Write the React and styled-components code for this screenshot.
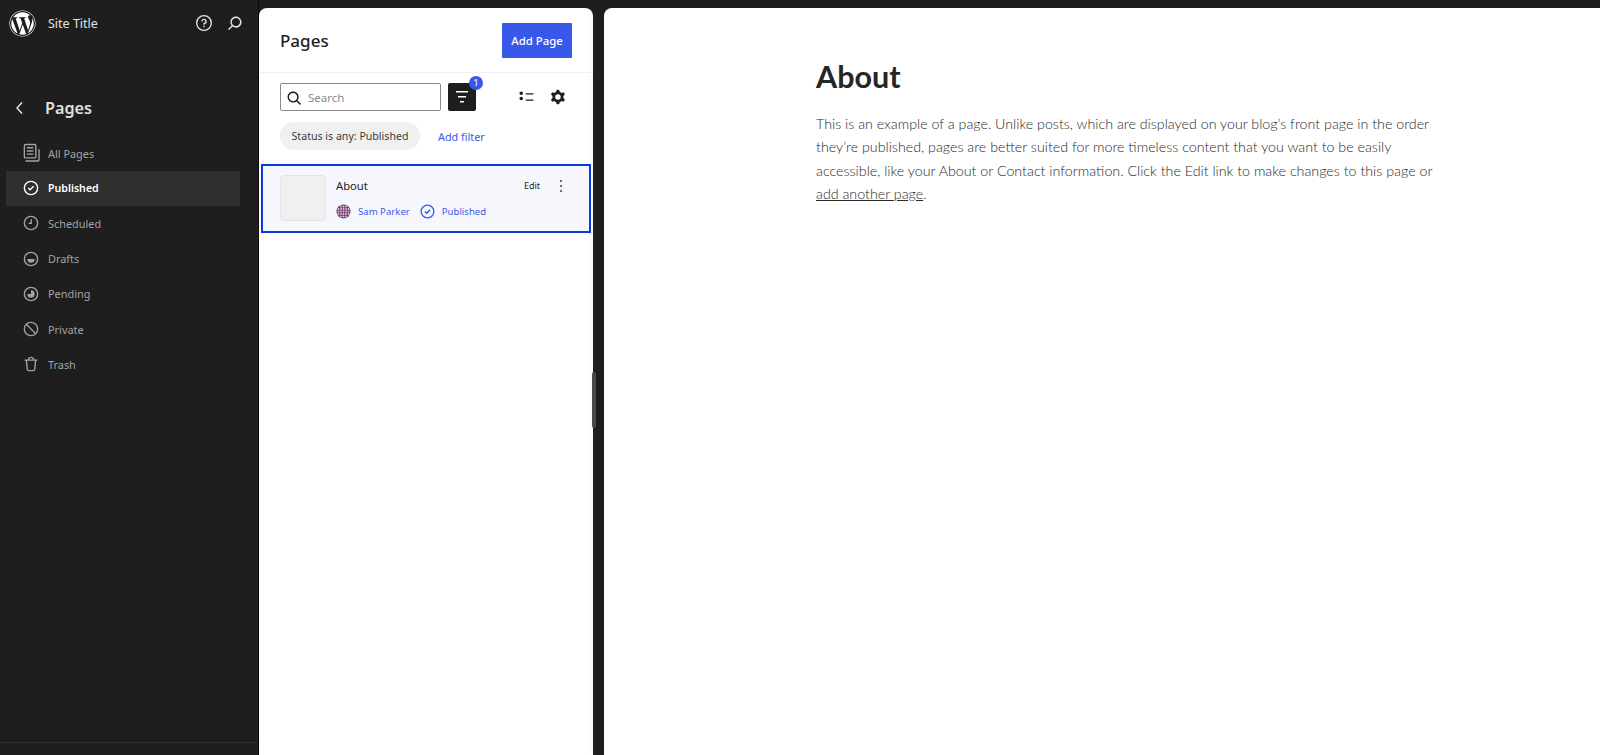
import React from "react";
import styled, { createGlobalStyle } from "styled-components";
import { FaWordpress } from "react-icons/fa";

const Global = createGlobalStyle`
  html, body { margin: 0; padding: 0; height: 100%; background: #1e1e1e; }
  body { font-family: "Noto Sans", "Open Sans", Arial, sans-serif; overflow: hidden; }
  * { box-sizing: border-box; }
`;

const Shell = styled.div`
  display: flex;
  height: 755px;
  background: #1e1e1e;
  overflow: hidden;
`;

const Sidebar = styled.aside`
  width: 259px;
  flex: none;
  display: flex;
  flex-direction: column;
  color: #e0e0e0;
  border-right: 1px solid #0a0a0a;
`;

const TopBar = styled.div`
  height: 46px;
  display: flex;
  align-items: center;
  padding: 0 12px 0 9px;
`;

const SiteTitle = styled.span`
  margin-left: 12px;
  flex: 1;
  font-size: 12.5px;
  color: #e4e4e4;
`;

const TopIcons = styled.div`
  display: flex;
  align-items: center;
  gap: 9px;
  color: #e4e4e4;
`;

const NavHead = styled.div`
  display: flex;
  align-items: center;
  margin-top: 46px;
  height: 32px;
  padding-left: 8px;
`;

const NavTitle = styled.h2`
  margin: 0 0 0 13px;
  font-size: 16.2px;
  line-height: 1;
  font-weight: 600;
  color: #e0e0e0;
`;

const NavList = styled.nav`
  margin: 11.5px 18px 0 6px;
  display: flex;
  flex-direction: column;
`;

const NavItem = styled.div`
  height: 35.2px;
  display: flex;
  align-items: center;
  gap: 6px;
  padding-left: 14px;
  font-size: ${(p) => (p.$active ? "10.6px" : "10.9px")};
  color: ${(p) => (p.$active ? "#ffffff" : "#a3a3a3")};
  font-weight: ${(p) => (p.$active ? 600 : 400)};
  background: ${(p) => (p.$active ? "#2f2f2f" : "transparent")};
`;

const SideFoot = styled.div`
  margin-top: auto;
  height: 13px;
  border-top: 1px solid #2f2f2f;
`;

const ListPanel = styled.section`
  position: relative;
  width: 334px;
  flex: none;
  margin-top: 8px;
  background: linear-gradient(to right, #ffffff 97%, #fbfbfb 100%);
  border-radius: 8px 8px 0 0;
  display: flex;
  flex-direction: column;
`;

const ResizeHandle = styled.div`
  position: absolute;
  right: -3px;
  top: 364px;
  width: 4px;
  height: 56px;
  background: #4b4b4b;
  border-radius: 2px;
`;

const PanelHead = styled.header`
  height: 65px;
  flex: none;
  display: flex;
  align-items: center;
  justify-content: space-between;
  padding: 1px 21px 0;
  border-bottom: 1px solid #f0f0f0;
`;

const PanelTitle = styled.h1`
  margin: 0;
  font-size: 17px;
  font-weight: 500;
  color: #1e1e1e;
`;

const AddButton = styled.button`
  width: 70px;
  height: 35px;
  border: 0;
  border-radius: 1px;
  background: #3858e9;
  color: #fff;
  font: 500 11.4px "Noto Sans", sans-serif;
  padding: 0;
`;

const Toolbar = styled.div`
  display: flex;
  align-items: center;
  padding: 10px 21px 0;
  height: 38px;
  flex: none;
`;

const SearchBox = styled.div`
  width: 161px;
  height: 28px;
  border: 1px solid #8a8a8a;
  border-radius: 2px;
  display: flex;
  align-items: center;
  gap: 3px;
  padding: 1px 0 0 2px;
  font-size: 11.5px;
  color: #8a8a8a;
`;

const FilterButton = styled.div`
  position: relative;
  width: 28px;
  height: 28px;
  margin-left: 7px;
  background: #1e1e1e;
  border-radius: 2px;
  color: #fff;
  display: flex;
  align-items: center;
  justify-content: center;
`;

const Badge = styled.span`
  position: absolute;
  top: -7px;
  right: -7px;
  width: 14px;
  height: 14px;
  border-radius: 50%;
  background: #3858e9;
  color: #fff;
  font-size: 9.5px;
  line-height: 14px;
  text-align: center;
`;

const ViewIcons = styled.div`
  margin-left: auto;
  margin-right: 3px;
  display: flex;
  align-items: center;
  gap: 10px;
  color: #1e1e1e;
`;

const FilterRow = styled.div`
  display: flex;
  align-items: center;
  padding: 11px 21px 0;
  flex: none;
`;

const Chip = styled.div`
  height: 28px;
  width: 140px;
  border-radius: 14px;
  background: #f0f0f0;
  color: #3a3a3a;
  font-size: 10.6px;
  line-height: 28px;
  text-align: center;
  white-space: nowrap;
`;

const AddFilter = styled.span`
  margin-left: 18px;
  font-size: 10.8px;
  color: #3858e9;
`;

const PageRow = styled.article`
  margin: 14px 2px 0 2px;
  height: 69px;
  border: 2px solid #0b3be0;
  background: #f6f7fd;
  display: flex;
  align-items: flex-start;
  padding: 9px 0 0 17px;
`;

const Thumb = styled.div`
  width: 46px;
  height: 46px;
  flex: none;
  background: #f0f0f0;
  border: 1px solid #e4e4e4;
  border-radius: 4px;
`;

const RowBody = styled.div`
  margin-left: 10px;
  flex: 1;
  display: flex;
  flex-direction: column;
`;

const RowTop = styled.div`
  display: flex;
  align-items: center;
  height: 21px;
`;

const RowTitle = styled.span`
  flex: 1;
  font-size: 11.2px;
  color: #1e1e1e;
`;

const EditLink = styled.span`
  font-size: 9px;
  color: #1e1e1e;
`;

const More = styled.span`
  display: flex;
  margin: 0 18px 0 11px;
  color: #1e1e1e;
`;

const RowMeta = styled.div`
  display: flex;
  align-items: center;
  margin-top: 5px;
  font-size: 9.6px;
  color: #3858e9;
`;

const MetaText = styled.span`
  margin-left: ${(p) => p.$gap}px;
`;

const Preview = styled.main`
  flex: 1;
  margin: 8px 0 0 11px;
  background: #fff;
  border-radius: 8px 0 0 0;
  padding: 50px 0 0 212px;
  font-family: Lato, "Noto Sans", sans-serif;
`;

const PreviewTitle = styled.h1`
  margin: 0;
  font: 700 30.5px/36px Lato, sans-serif;
  color: #262626;
`;

const PreviewBody = styled.p`
  margin: 18px 0 0;
  font-size: 14.25px;
  line-height: 23.4px;
  font-weight: 300;
  color: #2a2a2a;
  white-space: nowrap;
`;

const PreviewLink = styled.span`
  text-decoration: underline;
`;

const Icon = ({ d, size = 24, style }) => (
  <svg width={size} height={size} viewBox="0 0 24 24" fill="currentColor" style={{ flex: "none", display: "block", ...style }}>
    {[].concat(d).map((p, i) => (
      <path key={i} d={p} fillRule="evenodd" clipRule="evenodd" />
    ))}
  </svg>
);

const ring = "M12 18.5a6.5 6.5 0 1 1 0-13 6.5 6.5 0 0 1 0 13ZM4 12a8 8 0 1 1 16 0 8 8 0 0 1-16 0Z";
const paths = {
  pages: [
    "M14.5 5.5h-7V7h7V5.5ZM7.5 9h7v1.5h-7V9Zm7 3.5h-7V14h7v-1.5Z",
    "M16 2H6a2 2 0 0 0-2 2v12a2 2 0 0 0 2 2h10a2 2 0 0 0 2-2V4a2 2 0 0 0-2-2ZM6 3.5h10a.5.5 0 0 1 .5.5v12a.5.5 0 0 1-.5.5H6a.5.5 0 0 1-.5-.5V4a.5.5 0 0 1 .5-.5Z",
    "M20 8v11c0 .69-.31 1-.999 1H6v1.5h13.001c1.52 0 2.499-.982 2.499-2.5V8H20Z",
  ],
  published: ring + "m11.53-1.47-1.06-1.06L11 12.94l-1.47-1.47-1.06 1.06L11 15.06l4.53-4.53Z",
  scheduled: ring + "m9 1V8h-1.5v3.5h-2V13H13Z",
  drafts: ring + "m8 4a4 4 0 0 0 4-4H8a4 4 0 0 0 4 4Z",
  pending: ring + "m8 4a4 4 0 0 1-4-4h4V8a4 4 0 0 1 0 8Z",
  notAllowed: "M12 18.5A6.5 6.5 0 0 1 6.93 7.931l9.139 9.138A6.473 6.473 0 0 1 12 18.5Zm5.123-2.498a6.5 6.5 0 0 0-9.124-9.124l9.124 9.124ZM4 12a8 8 0 1 1 16 0 8 8 0 0 1-16 0Z",
  trash: "M12 5.5A2.25 2.25 0 0 0 9.878 7h4.244A2.251 2.251 0 0 0 12 5.5ZM12 4a3.751 3.751 0 0 0-3.675 3H5v1.5h1.27l.818 8.997a2.75 2.75 0 0 0 2.739 2.501h4.347a2.75 2.75 0 0 0 2.738-2.5L17.73 8.5H19V7h-3.325A3.751 3.751 0 0 0 12 4Zm4.224 4.5H7.776l.806 8.861a1.25 1.25 0 0 0 1.245 1.137h4.347a1.25 1.25 0 0 0 1.245-1.137l.805-8.861Z",
  help: "M12 4.75a7.25 7.25 0 100 14.5 7.25 7.25 0 000-14.5zM3.25 12a8.75 8.75 0 1117.5 0 8.75 8.75 0 01-17.5 0zM12 8.75a1.5 1.5 0 01.167 2.99c-.465.052-.917.44-.917 1.01V14h1.5v-.845A3 3 0 109 10.25h1.5a1.5 1.5 0 011.5-1.5zM11.25 15v1.5h1.5V15h-1.5z",
  search: "M13 5c-3.3 0-6 2.7-6 6 0 1.4.5 2.7 1.3 3.7l-3.8 3.8 1.1 1.1 3.8-3.8c1 .8 2.3 1.3 3.7 1.3 3.3 0 6-2.7 6-6S16.3 5 13 5zm0 10.5c-2.5 0-4.5-2-4.5-4.5s2-4.5 4.5-4.5 4.5 2 4.5 4.5-2 4.5-4.5 4.5z",
  searchInput: "M11 5c-3.3 0-6 2.7-6 6s2.7 6 6 6c1.4 0 2.7-.5 3.7-1.3l3.8 3.8 1.1-1.1-3.8-3.8c.8-1 1.3-2.3 1.3-3.7 0-3.3-2.7-6-6-6zm0 10.5c-2.5 0-4.5-2-4.5-4.5s2-4.5 4.5-4.5 4.5 2 4.5 4.5-2 4.5-4.5 4.5z",
  funnel: "M10 17.5H14V16H10V17.5ZM6 6V7.5H18V6H6ZM8 12.5H16V11H8V12.5Z",
  list: "M11.1 15.8H20v-1.5h-8.9v1.5zm0-8.6v1.5H20V7.2h-8.9zM6 11c-1.1 0-2 .9-2 2s.9 2 2 2 2-.9 2-2-.9-2-2-2zm0-6c-1.1 0-2 .9-2 2s.9 2 2 2 2-.9 2-2-.9-2-2-2z",
  cog: "M10.289 4.836A1 1 0 0111.275 4h1.306a1 1 0 01.987.836l.244 1.466c.787.26 1.503.679 2.108 1.218l1.393-.522a1 1 0 011.216.437l.653 1.13a1 1 0 01-.23 1.273l-1.148.944a6.025 6.025 0 010 2.435l1.149.946a1 1 0 01.23 1.272l-.653 1.13a1 1 0 01-1.216.437l-1.394-.522c-.605.54-1.32.958-2.108 1.218l-.244 1.466a1 1 0 01-.987.836h-1.306a1 1 0 01-.986-.836l-.244-1.466a5.995 5.995 0 01-2.108-1.218l-1.394.522a1 1 0 01-1.217-.436l-.653-1.131a1 1 0 01.23-1.272l1.149-.946a6.026 6.026 0 010-2.435l-1.148-.944a1 1 0 01-.23-1.272l.653-1.131a1 1 0 011.217-.437l1.393.522a5.994 5.994 0 012.108-1.218l.244-1.466zM14.929 12a3 3 0 11-6 0 3 3 0 016 0z",
  more: "M13 19h-2v-2h2v2zm0-6h-2v-2h2v2zm0-6h-2V5h2v2z",
  back: "M14.6 7l-1.2-1L8 12l5.4 6 1.2-1-4.6-5z",
};

const Avatar = () => {
  const dots = [];
  for (let y = 0; y < 5; y++) {
    for (let x = 0; x < 5; x++) {
      const cx = 2.5 + x * 2.5;
      const cy = 2.5 + y * 2.5;
      if ((cx - 7.5) ** 2 + (cy - 7.5) ** 2 < 40) dots.push(<circle key={`${x}-${y}`} cx={cx} cy={cy} r="0.9" fill="#e3c9df" />);
    }
  }
  return (
    <svg width="15" height="15" viewBox="0 0 15 15" style={{ flex: "none", display: "block" }}>
      <circle cx="7.5" cy="7.5" r="7" fill="#6f3a68" />
      {dots}
    </svg>
  );
};

const navItems = [
  ["All Pages", paths.pages],
  ["Published", paths.published, true],
  ["Scheduled", paths.scheduled],
  ["Drafts", paths.drafts],
  ["Pending", paths.pending],
  ["Private", paths.notAllowed],
  ["Trash", paths.trash],
];

export default function App() {
  return (
    <Shell>
      <Global />
      <Sidebar>
        <TopBar>
          <FaWordpress size={27} color="#fff" />
          <SiteTitle>Site Title</SiteTitle>
          <TopIcons>
            <Icon d={paths.help} size={22} />
            <Icon d={paths.search} size={22} />
          </TopIcons>
        </TopBar>
        <NavHead>
          <Icon d={paths.back} size={24} />
          <NavTitle>Pages</NavTitle>
        </NavHead>
        <NavList>
          {navItems.map(([label, d, active]) => (
            <NavItem key={label} $active={active}>
              <Icon d={d} size={22} />
              {label}
            </NavItem>
          ))}
        </NavList>
        <SideFoot />
      </Sidebar>
      <ListPanel>
        <PanelHead>
          <PanelTitle>Pages</PanelTitle>
          <AddButton>Add Page</AddButton>
        </PanelHead>
        <Toolbar>
          <SearchBox>
            <Icon d={paths.searchInput} size={22} style={{ color: "#1e1e1e" }} />
            Search
          </SearchBox>
          <FilterButton>
            <Icon d={paths.funnel} size={24} />
            <Badge>1</Badge>
          </FilterButton>
          <ViewIcons>
            <Icon d={paths.list} size={21} />
            <Icon d={paths.cog} size={22} />
          </ViewIcons>
        </Toolbar>
        <FilterRow>
          <Chip>Status is any: Published</Chip>
          <AddFilter>Add filter</AddFilter>
        </FilterRow>
        <PageRow>
          <Thumb />
          <RowBody>
            <RowTop>
              <RowTitle>About</RowTitle>
              <EditLink>Edit</EditLink>
              <More>
                <Icon d={paths.more} size={20} />
              </More>
            </RowTop>
            <RowMeta>
              <Avatar />
              <MetaText $gap={7}>Sam Parker</MetaText>
              <Icon d={paths.published} size={21} style={{ marginLeft: 7 }} />
              <MetaText $gap={4}>Published</MetaText>
            </RowMeta>
          </RowBody>
        </PageRow>
        <ResizeHandle />
      </ListPanel>
      <Preview>
        <PreviewTitle>About</PreviewTitle>
        <PreviewBody>
          This is an example of a page. Unlike posts, which are displayed on your blog’s front page in the order
          <br />
          they’re published, pages are better suited for more timeless content that you want to be easily
          <br />
          accessible, like your About or Contact information. Click the Edit link to make changes to this page or
          <br />
          <PreviewLink>add another page</PreviewLink>.
        </PreviewBody>
      </Preview>
    </Shell>
  );
}
